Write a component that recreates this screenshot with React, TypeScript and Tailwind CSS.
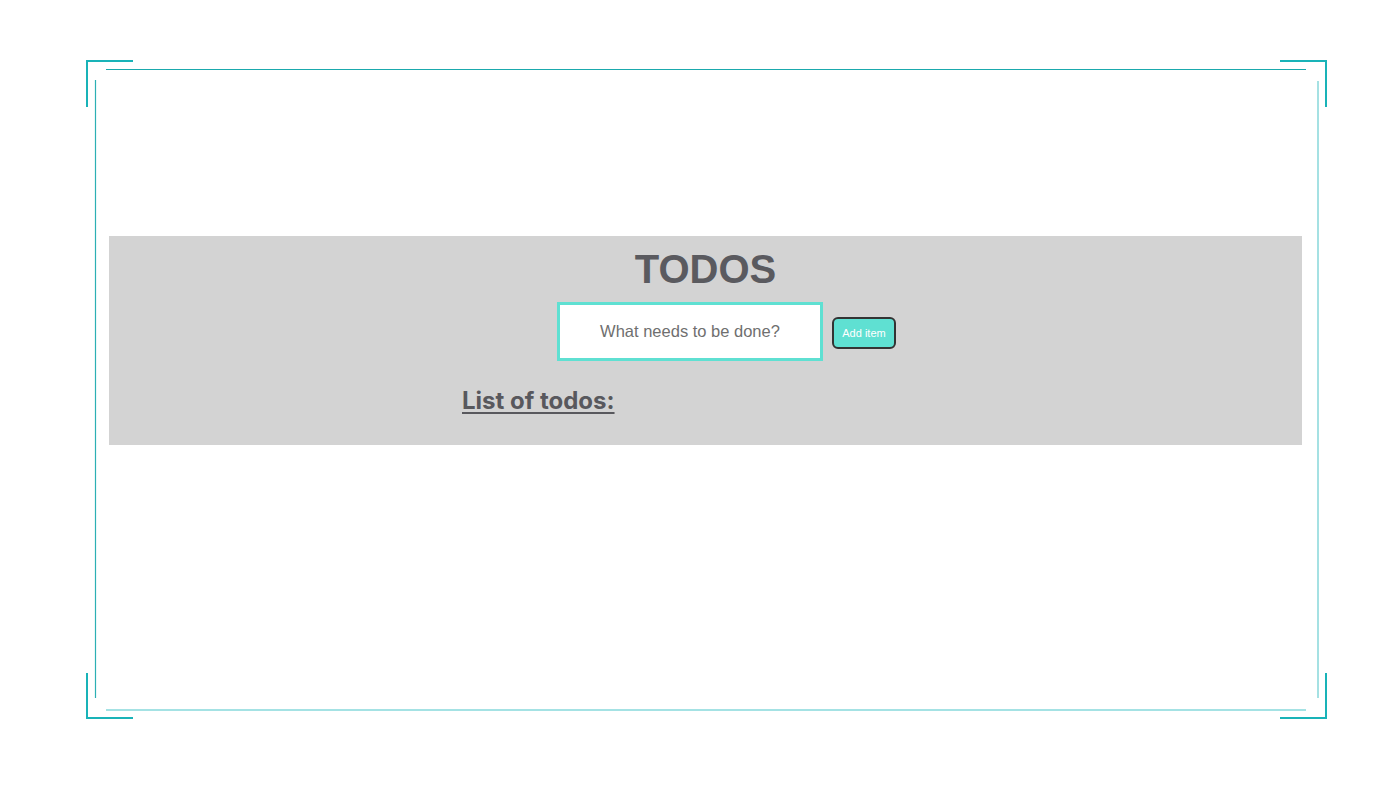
import { useState } from "react";

/* todo screen inside a device-style frame */

const Frame = () => (
  <svg
    className="absolute inset-0 pointer-events-none"
    width="1400"
    height="800"
    viewBox="0 0 1400 800"
    fill="none"
  >
    {/* corner brackets */}
    <g stroke="#19b3b8" strokeWidth="2">
      <path d="M87 107V61H133" />
      <path d="M1280 61H1326V107" />
      <path d="M87 673V718H133" />
      <path d="M1280 718H1326V673" />
    </g>
    {/* inner lines */}
    <path d="M106 69.5H1306" stroke="#1aa9ad" strokeWidth="1.2" />
    <path d="M95.5 80V698" stroke="#2cb0b4" strokeWidth="1.2" />
    <path d="M1318 81V698" stroke="#7fd5d7" strokeWidth="1.4" />
    <path d="M106 710H1306" stroke="#86d9db" strokeWidth="1.4" />
  </svg>
);

export default function App() {
  const [text, setText] = useState("");
  const [todos, setTodos] = useState<string[]>([]);

  const add = () => {
    if (!text.trim()) return;
    setTodos([...todos, text.trim()]);
    setText("");
  };

  return (
    <div className="relative w-[1400px] h-[800px] bg-white overflow-hidden">
      <Frame />

      <div className="pt-[236px] pl-[109px]">
        <section className="w-[1193px] h-[209px] bg-[#d3d3d3] flex flex-col items-center pt-[10px]">
          {/* Title */}
          <h1 className="font-['Liberation_Sans',Arial,sans-serif] text-[40px] leading-[46px] font-bold text-[#5a5a5f]">
            TODOS
          </h1>

          {/* Input row */}
          <div className="flex items-start gap-[9px] mt-[10px] ml-[42px]">
            <input
              value={text}
              onChange={(e) => setText(e.target.value)}
              placeholder="What needs to be done?"
              className="w-[266px] h-[59px] bg-white border-[3px] border-[#5fe0d2] text-center outline-none font-['Liberation_Sans',Arial,sans-serif] text-[16.5px] text-[#555] placeholder:text-[#6f6f6f]"
            />
            <button
              onClick={add}
              className="mt-[15px] w-[64px] h-[32px] rounded-[6px] border-2 border-[#333] bg-[#5fe0d2] text-white text-[11px] font-['Liberation_Sans',Arial,sans-serif]"
            >
              Add item
            </button>
          </div>

          {/* List */}
          <div className="self-start ml-[353px] mt-[26px]">
            <h2 className="font-['Inter',sans-serif] text-[24px] leading-[28px] font-bold text-[#58585d] underline decoration-2 underline-offset-[3px]">
              List of todos:
            </h2>
            <ul>
              {todos.map((t, i) => (
                <li key={i}>{t}</li>
              ))}
            </ul>
          </div>
        </section>
      </div>
    </div>
  );
}
